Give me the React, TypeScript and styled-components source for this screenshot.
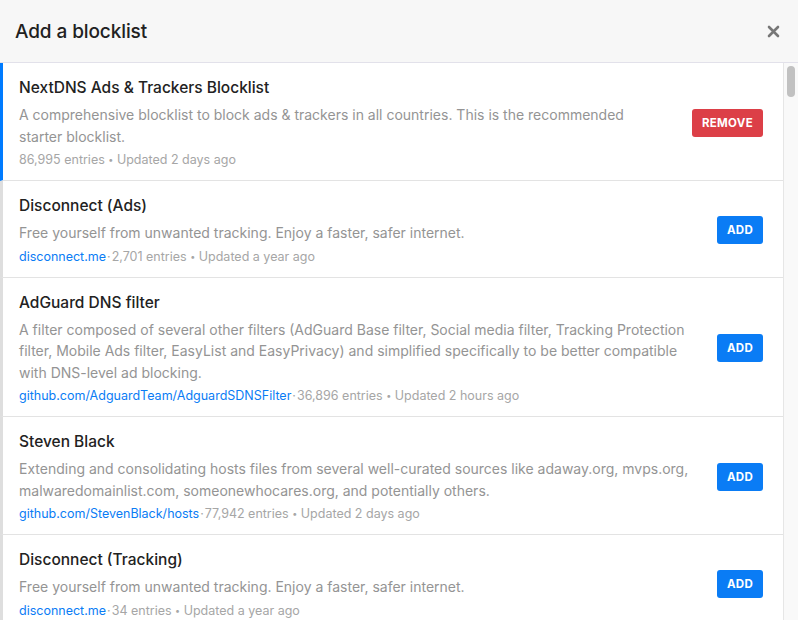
import React from 'react';
import styled, { createGlobalStyle } from 'styled-components';

type Blocklist = {
  name: string;
  description: string;
  website?: string;
  entries: string;
  updated: string;
  added?: boolean;
};

const blocklists: Blocklist[] = [
  {
    name: 'NextDNS Ads & Trackers Blocklist',
    description:
      'A comprehensive blocklist to block ads & trackers in all countries. This is the recommended starter blocklist.',
    entries: '86,995',
    updated: '2 days ago',
    added: true,
  },
  {
    name: 'Disconnect (Ads)',
    description: 'Free yourself from unwanted tracking. Enjoy a faster, safer internet.',
    website: 'disconnect.me',
    entries: '2,701',
    updated: 'a year ago',
  },
  {
    name: 'AdGuard DNS filter',
    description:
      'A filter composed of several other filters (AdGuard Base filter, Social media filter, Tracking Protection filter, Mobile Ads filter, EasyList and EasyPrivacy) and simplified specifically to be better compatible with DNS-level ad blocking.',
    website: 'github.com/AdguardTeam/AdguardSDNSFilter',
    entries: '36,896',
    updated: '2 hours ago',
  },
  {
    name: 'Steven Black',
    description:
      'Extending and consolidating hosts files from several well-curated sources like adaway.org, mvps.org, malwaredomainlist.com, someonewhocares.org, and potentially others.',
    website: 'github.com/StevenBlack/hosts',
    entries: '77,942',
    updated: '2 days ago',
  },
  {
    name: 'Disconnect (Tracking)',
    description: 'Free yourself from unwanted tracking. Enjoy a faster, safer internet.',
    website: 'disconnect.me',
    entries: '34',
    updated: 'a year ago',
  },
];

const App: React.FC = () => {
  return (
    <>
      <GlobalStyle />
      <Modal>
        <Header>
          <Title>Add a blocklist</Title>
          <CloseButton aria-label="Close">
            <svg width="13" height="13" viewBox="0 0 13 13">
              <path d="M2 2 L11 11 M11 2 L2 11" stroke="#777" strokeWidth="2.6" strokeLinecap="round" />
            </svg>
          </CloseButton>
        </Header>

        <Main>
          <List>
            {blocklists.map((list, index) => (
              <Item key={index} $active={!!list.added}>
                <Body>
                  <Name>{list.name}</Name>
                  <Description>{list.description}</Description>
                  <Meta>
                    {list.website && (
                      <>
                        <Website>{list.website}</Website>
                        <Dot>·</Dot>
                      </>
                    )}
                    {list.entries} entries <Bullet>•</Bullet> Updated {list.updated}
                  </Meta>
                </Body>
                <ActionButton $remove={!!list.added}>{list.added ? 'Remove' : 'Add'}</ActionButton>
              </Item>
            ))}
          </List>

          {/* scrollbars are hidden in the capture, so the gutter is drawn */}
          <ScrollTrack>
            <ScrollThumb />
          </ScrollTrack>
        </Main>
      </Modal>
    </>
  );
};

export default App;

/* Styling */
const GlobalStyle = createGlobalStyle`
  html, body {
    margin: 0;
    padding: 0;
    background: #fff;
  }
  body {
    font-family: 'Inter', 'Helvetica Neue', 'Liberation Sans', sans-serif;
    -webkit-font-smoothing: antialiased;
  }
`;

const Modal = styled.div`
  display: flex;
  flex-direction: column;
  height: 100vh;
  background: #fff;
  overflow: hidden;
`;

const Header = styled.div`
  flex: none;
  height: 62px;
  display: flex;
  align-items: center;
  justify-content: space-between;
  padding: 0 18px 0 15px;
  background: #f7f7f7;
  border-bottom: 1px solid #e2e1ea;
`;

const Title = styled.h5`
  margin: 0;
  font-size: 19px;
  font-weight: 500;
  color: #212121;
  letter-spacing: -0.1px;
`;

const CloseButton = styled.button`
  display: flex;
  align-items: center;
  justify-content: center;
  padding: 0;
  border: 0;
  background: transparent;
  cursor: pointer;
`;

const Main = styled.div`
  flex: 1;
  min-height: 0;
  display: flex;
`;

const List = styled.div`
  flex: 1;
  min-width: 0;
  overflow: hidden;
`;

const ScrollTrack = styled.div`
  flex: none;
  width: 15px;
  padding: 3px 4px 0 3px;
  box-sizing: border-box;
  background: #f9f9f9;
  border-left: 1px solid #e6e6e6;
`;

const ScrollThumb = styled.div`
  width: 8px;
  height: 31px;
  border-radius: 4px;
  background: #c1c1c1;
`;

const Item = styled.div<{ $active: boolean }>`
  display: flex;
  align-items: center;
  gap: 24px;
  padding: 13px 20px 11px 16px;
  border-left: 3px solid ${(p) => (p.$active ? '#007bff' : '#dedede')};
  border-bottom: 1px solid #e3e3e3;
`;

const Body = styled.div`
  flex: 1;
  min-width: 0;
`;

const Name = styled.div`
  font-size: 15.5px;
  line-height: 24px;
  font-weight: 500;
  color: #222;
`;

const Description = styled.div`
  margin-top: 4px;
  font-size: 14px;
  line-height: 21.5px;
  color: #949494;
`;

const Meta = styled.div`
  margin-top: 4px;
  font-size: 12.5px;
  line-height: 18px;
  color: #a6a6a6;
`;

const Website = styled.span`
  color: #0a7cf5;
`;

const Dot = styled.span`
  margin: 0 1px;
`;

const Bullet = styled.span`
  font-size: 9px;
  vertical-align: 1px;
`;

const ActionButton = styled.button<{ $remove: boolean }>`
  flex: none;
  height: 28px;
  padding: 0 10px;
  border: 0;
  border-radius: 3px;
  background: ${(p) => (p.$remove ? '#dc3f47' : '#0a7cf5')};
  color: #fff;
  font-family: inherit;
  font-size: 11.5px;
  font-weight: 700;
  letter-spacing: 0.3px;
  text-transform: uppercase;
  cursor: pointer;
`;
